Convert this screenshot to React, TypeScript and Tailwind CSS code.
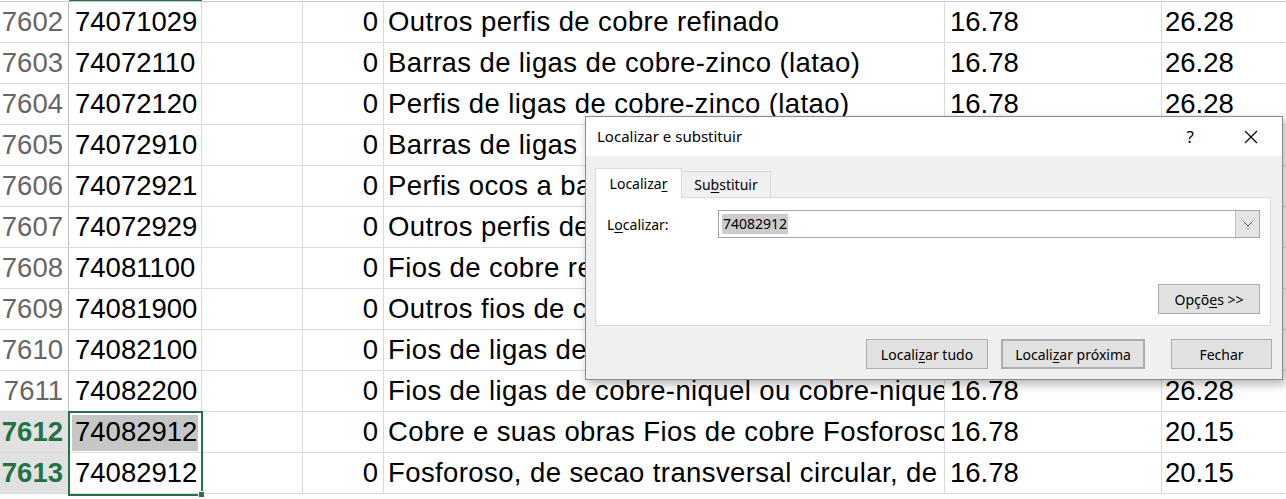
import React from 'react';

type Row = { n: number; code: string; desc: string; f: string; g: string };

const rows: Row[] = [
  { n: 7602, code: '74071029', desc: 'Outros perfis de cobre refinado', f: '16.78', g: '26.28' },
  { n: 7603, code: '74072110', desc: 'Barras de ligas de cobre-zinco (latao)', f: '16.78', g: '26.28' },
  { n: 7604, code: '74072120', desc: 'Perfis de ligas de cobre-zinco (latao)', f: '16.78', g: '26.28' },
  { n: 7605, code: '74072910', desc: 'Barras de ligas de cobre-estanho (bronze)', f: '16.78', g: '26.28' },
  { n: 7606, code: '74072921', desc: 'Perfis ocos a base de cobre-zinco (latao)', f: '16.78', g: '26.28' },
  { n: 7607, code: '74072929', desc: 'Outros perfis de ligas de cobre', f: '16.78', g: '26.28' },
  { n: 7608, code: '74081100', desc: 'Fios de cobre refinado, maior dimensao > 6mm', f: '16.78', g: '26.28' },
  { n: 7609, code: '74081900', desc: 'Outros fios de cobre refinado', f: '16.78', g: '26.28' },
  { n: 7610, code: '74082100', desc: 'Fios de ligas de cobre-zinco (latao)', f: '16.78', g: '26.28' },
  { n: 7611, code: '74082200', desc: 'Fios de ligas de cobre-niquel ou cobre-niquel-zinco', f: '16.78', g: '26.28' },
  { n: 7612, code: '74082912', desc: 'Cobre e suas obras Fios de cobre Fosforoso de secao', f: '16.78', g: '20.15' },
  { n: 7613, code: '74082912', desc: 'Fosforoso, de secao transversal circular, de diametro', f: '16.78', g: '20.15' },
];

function Sheet() {
  return (
    <div className="font-['Liberation_Sans',Arial,sans-serif] text-[27.5px] text-black">
      {/* header edge */}
      <div className="flex h-[2px] border-b border-[#c8c8c8]">
        <div className="w-[69px]" />
        <div className="w-[133px] bg-[#217346]" />
      </div>
      {rows.map((r) => {
        const sel = r.n >= 7612;
        return (
          <div key={r.n} className="flex h-[41px] border-b border-[#dadada]">
            <div
              className={`w-[69px] shrink-0 border-r border-[#bdbdbd] flex items-center justify-end pr-[5px] ${
                sel ? 'bg-[#e1e1e1] text-[#217346] font-bold' : 'text-[#666]'
              }`}
            >
              {r.n}
            </div>
            <div className="relative w-[133px] shrink-0 border-r border-[#dadada] flex items-center pl-[6px]">
              {r.n === 7612 && <div className="absolute left-[3px] top-[3px] right-[3px] bottom-[1px] bg-[#c6c6c6]" />}
              <span className="relative">{r.code}</span>
            </div>
            <div className="w-[101px] shrink-0 border-r border-[#dadada]" />
            <div className="w-[81px] shrink-0 border-r border-[#dadada] flex items-center justify-end pr-[5px]">0</div>
            <div className="w-[561px] shrink-0 border-r border-[#dadada] flex items-center pl-[4px] overflow-hidden whitespace-nowrap tracking-[0.4px]">
              {r.desc}
            </div>
            <div className="w-[217px] shrink-0 border-r border-[#dadada] flex items-center pl-[5px]">{r.f}</div>
            <div className="flex-1 flex items-center pl-[3px]">{r.g}</div>
          </div>
        );
      })}
    </div>
  );
}

function Btn({ children, className = '' }: { children: React.ReactNode; className?: string }) {
  return (
    <div
      className={`h-[30px] flex items-center justify-center bg-[#e1e1e1] border border-[#adadad] text-[14px] ${className}`}
    >
      {children}
    </div>
  );
}

function Dialog() {
  return (
    <div className="absolute left-[585px] top-[116px] w-[698px] h-[264px] bg-[#f0f0f0] border border-[#8a8a8a] shadow-[3px_4px_10px_rgba(0,0,0,0.3)] font-['Noto_Sans',sans-serif] text-[14px] text-black flex flex-col">
      <div className="h-[39px] bg-white flex items-center pl-[11px] pr-[24px] shrink-0">
        <span className="flex-1 text-[15px]">Localizar e substituir</span>
        <span className="text-[17px] mr-[50px]">?</span>
        <svg width="14" height="14" viewBox="0 0 14 14">
          <path d="M1 1 L13 13 M13 1 L1 13" stroke="#000" strokeWidth="1.2" fill="none" />
        </svg>
      </div>
      <div className="flex-1 flex flex-col px-[9px] pt-[11px]">
        <div className="flex items-end h-[30px]">
          <div className="w-[87px] h-[30px] bg-white border border-b-0 border-[#d9d9d9] flex items-center justify-center relative top-[1px] z-10">
            Localiza<u className="underline-offset-2">r</u>
          </div>
          <div className="w-[89px] h-[26px] bg-[#f0f0f0] border border-b-0 border-l-0 border-[#d9d9d9] flex items-center justify-center">
            Su<u className="underline-offset-2">b</u>stituir
          </div>
        </div>
        <div className="w-[676px] h-[129px] bg-white border border-[#d9d9d9] flex flex-col pl-[11px] pr-[10px] pt-[12px]">
          <div className="flex items-center h-[28px]">
            <span className="w-[111px]">
              L<u className="underline-offset-2">o</u>calizar:
            </span>
            <div className="flex-1 h-[28px] border border-[#a6a6a6] flex items-center">
              <div className="flex-1 pl-[3px] flex items-center">
                <span className="bg-[#cccccc] px-[1px] leading-[20px]">74082912</span>
              </div>
              <div className="w-[24px] h-[26px] bg-[#e5e5e5] border-l border-[#bdbdbd] flex items-center justify-center">
                <svg width="10" height="6" viewBox="0 0 10 6">
                  <path d="M0.5 0.5 L5 5 L9.5 0.5" stroke="#555" strokeWidth="1" fill="none" />
                </svg>
              </div>
            </div>
          </div>
          <div className="flex-1 flex items-end justify-end pb-[11px]">
            <Btn className="w-[102px]">
              Opçõ<u className="underline-offset-2">e</u>s &gt;&gt;
            </Btn>
          </div>
        </div>
        <div className="flex justify-end items-center mt-[13px] pr-[1px]">
          <Btn className="w-[122px] mr-[13px]">
            Locali<u className="underline-offset-2">z</u>ar tudo
          </Btn>
          <Btn className="w-[144px] mr-[26px] border-2 border-[#0078d7]">
            Locali<u className="underline-offset-2">z</u>ar próxima
          </Btn>
          <Btn className="w-[101px]">Fechar</Btn>
        </div>
      </div>
    </div>
  );
}

export default function App() {
  return (
    <div className="relative w-[1286px] h-[499px] overflow-hidden bg-white">
      <Sheet />
      {/* selection range */}
      <div className="absolute left-[68px] top-[411px] w-[135px] h-[85px] border-2 border-[#217346]" />
      <div className="absolute left-[198px] top-[491px] w-[7px] h-[7px] bg-[#217346] border border-white" />
      <Dialog />
    </div>
  );
}
